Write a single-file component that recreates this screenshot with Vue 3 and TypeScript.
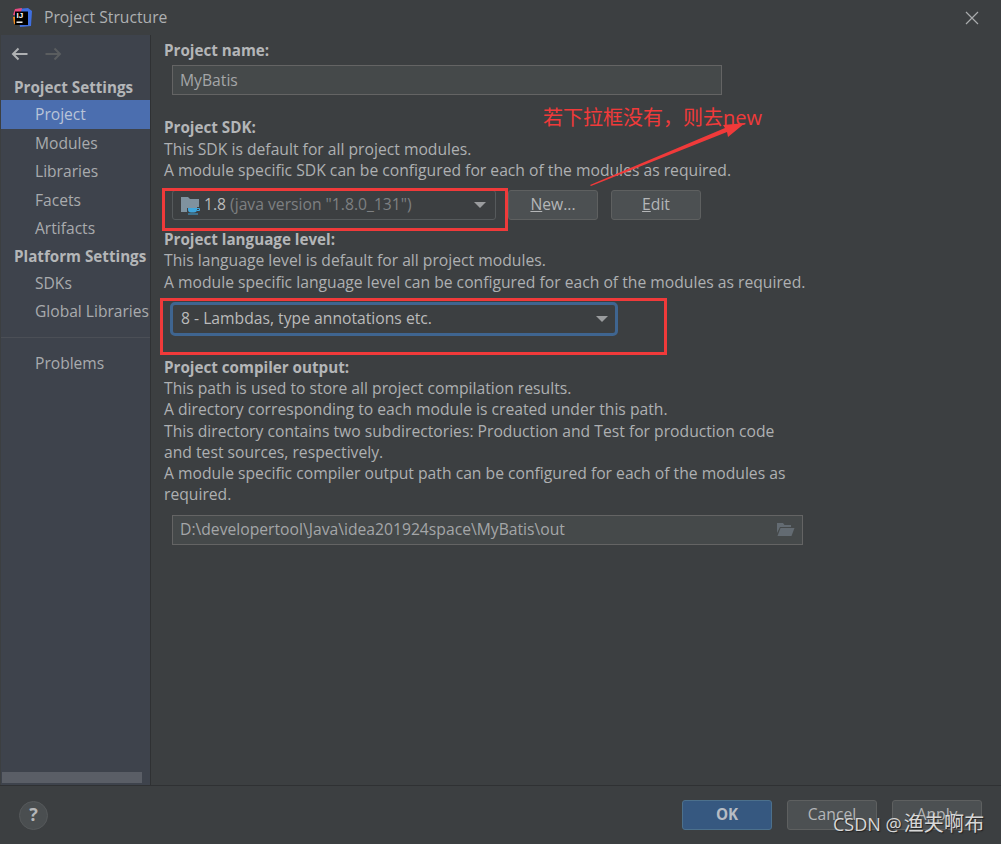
<script setup lang="ts">
const projectItems: string[] = ['Modules', 'Libraries', 'Facets', 'Artifacts']
const platformItems: string[] = ['SDKs', 'Global Libraries']
</script>

<template>
  <div class="dialog">
    <header class="titlebar">
      <svg class="logo" width="20" height="20" viewBox="0 0 20 20">
        <path d="M5 1 L16 0 L20 3 L19 18 L8 19 Z" fill="#3f6fe0" />
        <path d="M3 1 L10 0 L8 8 L1 7 Z" fill="#e8487f" />
        <path d="M1 9 L8 8 L7 17 L2 16 Z" fill="#f08a1d" />
        <rect x="3" y="3.5" width="13" height="13.5" fill="#000" />
        <text x="4.5" y="10" class="logo-text">IJ</text>
        <rect x="4.5" y="13.5" width="6" height="1.4" fill="#fff" />
      </svg>
      <span class="title">Project Structure</span>
      <svg class="close" width="14" height="14" viewBox="0 0 14 14">
        <path d="M1 1 L13 13 M13 1 L1 13" stroke="#a9abad" stroke-width="1.2" />
      </svg>
    </header>

    <div class="body">
      <aside class="sidebar">
        <div class="nav-arrows">
          <svg width="18" height="14" viewBox="0 0 18 14">
            <path d="M16.5 7 H2 M7.5 1.5 L2 7 L7.5 12.5" fill="none" stroke="#afb1b3" stroke-width="2" />
          </svg>
          <svg width="18" height="14" viewBox="0 0 18 14">
            <path d="M1.5 7 H16 M10.5 1.5 L16 7 L10.5 12.5" fill="none" stroke="#5a5d5f" stroke-width="2" />
          </svg>
        </div>
        <div class="group group-first">Project Settings</div>
        <div class="item selected">Project</div>
        <div v-for="i in projectItems" :key="i" class="item">{{ i }}</div>
        <div class="group">Platform Settings</div>
        <div v-for="i in platformItems" :key="i" class="item">{{ i }}</div>
        <div class="separator"></div>
        <div class="item">Problems</div>
        <div class="spacer"></div>
        <div class="scrollbar"></div>
      </aside>

      <main class="content">
        <div class="heading first">Project name:</div>
        <div class="field name-field">MyBatis</div>

        <div class="heading sdk-heading">Project SDK:</div>
        <p class="text">This SDK is default for all project modules.</p>
        <p class="text">A module specific SDK can be configured for each of the modules as required.</p>
        <div class="sdk-row">
          <div class="combo sdk-combo">
            <svg class="jdk" width="19" height="18" viewBox="0 0 19 18">
              <path d="M0 0 H7 L9 2 H18 V10 H16 V11 H6 V15 H0 Z" fill="#7f929f" />
              <path d="M7 11 H16 V12.5 Q16 15.5 13 15.5 H10 Q7 15.5 7 12.5 Z" fill="#3fa6dc" />
              <path d="M16 11.5 H18.5 V13.5 H16" fill="none" stroke="#3fa6dc" />
              <path d="M7 17 H17" stroke="#3fa6dc" />
            </svg>
            <span>1.8</span>
            <span class="muted">(java version "1.8.0_131")</span>
            <i class="caret"></i>
          </div>
          <button class="btn"><u>N</u>ew...</button>
          <button class="btn edit-btn"><u>E</u>dit</button>
        </div>

        <div class="heading level-heading">Project language level:</div>
        <p class="text">This language level is default for all project modules.</p>
        <p class="text">A module specific language level can be configured for each of the modules as required.</p>
        <div class="combo level-combo">
          <span>8 - Lambdas, type annotations etc.</span>
          <i class="caret"></i>
        </div>

        <div class="heading output-heading">Project compiler output:</div>
        <p class="text">This path is used to store all project compilation results.</p>
        <p class="text">A directory corresponding to each module is created under this path.</p>
        <p class="text">This directory contains two subdirectories: Production and Test for production code</p>
        <p class="text">and test sources, respectively.</p>
        <p class="text">A module specific compiler output path can be configured for each of the modules as</p>
        <p class="text">required.</p>
        <div class="field path-field">
          <span>D:\developertool\Java\idea201924space\MyBatis\out</span>
          <svg width="19" height="15" viewBox="0 0 19 15">
            <path d="M1 1 H7 L8.5 3 H15 V5 H4 L1 11 Z" fill="#636b72" />
            <path d="M4.5 6 H18.5 L15.5 14 H1.5 Z" fill="#636b72" />
          </svg>
        </div>
      </main>
    </div>

    <footer class="footer">
      <div class="help">?</div>
      <div class="footer-buttons">
        <button class="btn ok">OK</button>
        <button class="btn">Cancel</button>
        <button class="btn">Apply</button>
      </div>
    </footer>

    <!-- annotations lying over the dialog -->
    <div class="mark mark-sdk"></div>
    <div class="mark mark-level"></div>
    <span class="note">若下拉框没有，则去new</span>
    <svg class="arrow" width="160" height="80" viewBox="0 0 160 80">
      <path d="M0 75 L135 18 L133 15 L155 13 L138 27 L137 22 L1 76 Z" fill="#f03a3a" />
    </svg>
    <span class="watermark">CSDN @<span class="watermark-cjk">渔夫啊布</span></span>
  </div>
</template>

<style>
html, body { margin: 0; background: #3c3f41; }
</style>

<style scoped>
.dialog {
  position: relative;
  width: 1001px;
  height: 844px;
  display: flex;
  flex-direction: column;
  overflow: hidden;
  background: #3c3f41;
  color: #bbbbbb;
  font-family: "Open Sans", "Noto Sans", "Noto Sans CJK SC", sans-serif;
  font-size: 15.7px;
  line-height: 21.25px;
}
.titlebar {
  height: 35px;
  flex: none;
  display: flex;
  align-items: center;
  padding: 1px 22px 0 12px;
  box-sizing: border-box;
}
.logo { flex: none; }
.logo-text { font: 700 8px "Liberation Sans", sans-serif; fill: #fff; }
.title { margin-left: 12px; color: #aeb0b2; flex: 1; }
.body { flex: 1; display: flex; min-height: 0; }
.sidebar {
  width: 149px;
  margin-left: 1px;
  flex: none;
  display: flex;
  flex-direction: column;
  background: #3e434c;
  border-right: 1px solid #2f3133;
}
.nav-arrows {
  height: 37px;
  display: flex;
  align-items: center;
  gap: 15px;
  padding-left: 10px;
  flex: none;
}
.group {
  height: 26px;
  line-height: 26px;
  padding-left: 13px;
  font-weight: 700;
  font-size: 15.2px;
  color: #b4b6b8;
  flex: none;
  white-space: nowrap;
}
.group-first { margin-top: 2px; }
.item {
  height: 28.5px;
  line-height: 29.5px;
  padding-left: 34px;
  flex: none;
  font-size: 15.6px;
  color: #a9abae;
  white-space: nowrap;
}
.selected { background: #4b6eaf; color: #b9c4d8; }
.separator { height: 1px; margin: 11px 0 11px; background: #4b4f56; flex: none; }
.spacer { flex: 1; }
.scrollbar { height: 11px; width: 140px; margin: 0 0 2px 1px; background: #5a5e66; flex: none; }
.content { flex: 1; padding: 0 0 0 13px; min-width: 0; }
.heading { font-weight: 700; font-size: 15.2px; color: #b4b6b8; }
.first { margin-top: 5px; }
.text { margin: 0; color: #aeb0b2; white-space: nowrap; }
.field {
  box-sizing: border-box;
  height: 30px;
  margin-left: 8px;
  padding: 0 7px;
  display: flex;
  align-items: center;
  background: #45494a;
  border: 1px solid #646464;
  color: #a4a6a8;
}
.name-field { width: 550px; margin-top: 4px; }
.sdk-heading { margin-top: 22px; }
.sdk-row { display: flex; margin: 9px 0 0 8px; gap: 12px; }
.edit-btn { margin-left: 1px; }
.combo {
  box-sizing: border-box;
  height: 30px;
  display: flex;
  align-items: center;
  gap: 4px;
  padding: 0 8px;
  background: #3c3f41;
  border: 1px solid #565a5c;
  border-radius: 3px;
}
.sdk-combo { width: 324px; }
.jdk { flex: none; margin-top: 2px; }
.muted { color: #7e8082; }
.caret {
  margin-left: auto;
  width: 0;
  height: 0;
  border-left: 6px solid transparent;
  border-right: 6px solid transparent;
  border-top: 6px solid #9a9c9e;
  margin-right: 1px;
}
.btn {
  box-sizing: border-box;
  width: 90px;
  height: 30px;
  padding: 0;
  background: #4c5052;
  border: 1px solid #5e6060;
  border-radius: 3px;
  color: #b4b6b8;
  font: inherit;
}
.level-heading { margin-top: 9px; }
.level-combo {
  width: 448px;
  height: 34px;
  margin: 9px 0 0 6px;
  border: 3px solid #3f6590;
  border-radius: 5px;
}
.level-combo .caret { margin-right: -1px; }
.output-heading { margin-top: 21px; }
.path-field { width: 631px; margin-top: 9px; justify-content: space-between; }
.footer {
  height: 59px;
  flex: none;
  display: flex;
  align-items: center;
  justify-content: space-between;
  box-sizing: border-box;
  border-top: 1px solid #2f3133;
  padding: 0 19px;
}
.help {
  box-sizing: border-box;
  width: 29px;
  height: 29px;
  border-radius: 50%;
  border: 1px solid #56595b;
  background: #4a4e50;
  display: flex;
  align-items: center;
  justify-content: center;
  font-weight: 700;
  font-size: 18px;
  color: #b4b6b8;
}
.footer-buttons { display: flex; gap: 15px; }
.ok { background: #365880; border-color: #4c708c; font-weight: 700; font-size: 15.2px; color: #b6bcc4; }
.mark { position: absolute; border: 3px solid #f03a3a; box-sizing: border-box; }
.mark-sdk { left: 162px; top: 188px; width: 346px; height: 43px; }
.mark-level { left: 160px; top: 298px; width: 507px; height: 57px; }
.note {
  position: absolute;
  left: 543px;
  top: 105px;
  color: #f03a3a;
  font-size: 20px;
  line-height: 26px;
}
.arrow { position: absolute; left: 590px; top: 110px; }
.watermark {
  position: absolute;
  left: 833px;
  top: 812px;
  font-size: 18px;
  line-height: 24px;
  color: #d8d8d8;
  text-shadow: 1px 1px 1px #222;
  white-space: nowrap;
}
.watermark-cjk { font-size: 20px; margin-left: 2px; letter-spacing: 0.2px; }
</style>
